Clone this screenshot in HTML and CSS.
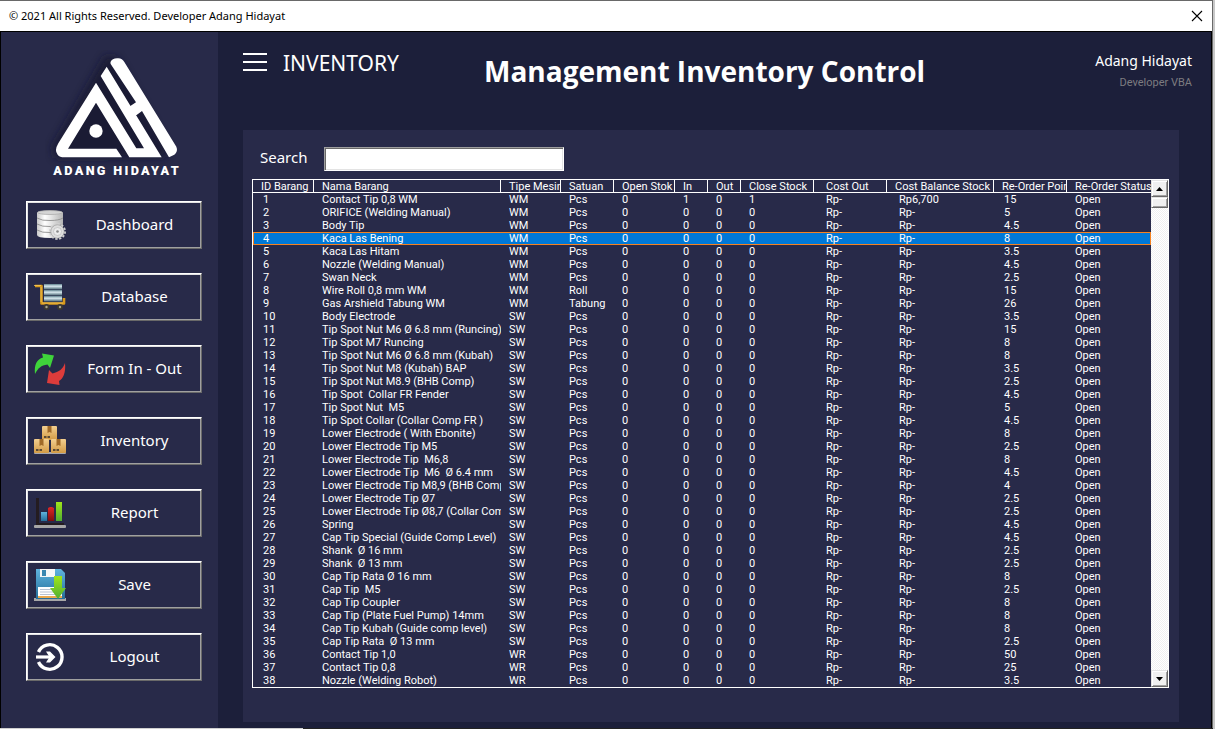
FILE: index.html
```html
<!DOCTYPE html>
<html lang="id">
<head>
<meta charset="utf-8">
<title>Management Inventory Control</title>
<link rel="stylesheet" href="styles.css">
</head>
<body>
<div class="window">
  <header class="titlebar">
    <span>© 2021 All Rights Reserved. Developer Adang Hidayat</span>
    <button class="close" type="button" aria-label="Close">
      <svg width="12" height="12" viewBox="0 0 12 12"><path d="M1 1L11 11M11 1L1 11" stroke="#000" stroke-width="1.1" fill="none"/></svg>
    </button>
  </header>
  <div class="body">
    <aside class="sidebar">
      <svg class="logo" viewBox="0 0 435 405" role="img" aria-label="Adang Hidayat">
        <defs><filter id="glow" x="-20%" y="-20%" width="140%" height="140%"><feGaussianBlur stdDeviation="12"/></filter></defs>
        <g filter="url(#glow)" opacity=".75">
          <path fill="#15162f" d="M180 18L215 20L372 300L360 322L30 325L22 290Z"/>
        </g>
        <g fill="#fff">
          <path d="M153 98L40 280Q27 302 38 314Q44 322 58 322L231 322L214 296L69 296L153 158L253 322L350 322L185 50L167 78L297 295L274 295Z"/>
          <path d="M197 42Q194 34 204 28Q210 24 220 25Q232 26 238 36L394 290Q400 304 388 314L372 322L291 183L275 195L262 196L246 168L256 168L273 157Z"/>
          <circle cx="153" cy="243" r="20"/>
        </g>
        <text class="logo-text" x="25" y="375">ADANG HIDAYAT</text>
      </svg>
      <nav class="menu">
        <button class="menu-item" type="button">
          <svg class="icon" viewBox="0 0 32 32">
            <defs><linearGradient id="cyl"><stop offset="0" stop-color="#c9c9c9"/><stop offset=".3" stop-color="#fff"/><stop offset="1" stop-color="#b5b5b5"/></linearGradient></defs>
            <path fill="url(#cyl)" d="M3 4Q3 1.500 16 1.500Q29 1.500 29 4L29 26Q28 29 16 29Q3 29 3 26Z"/>
            <ellipse cx="16" cy="3.500" rx="12.500" ry="2" fill="#d5d5d5" stroke="#a6a6a6" stroke-width=".7"/>
            <path d="M3 9Q8 12 16 11.500Q25 11.500 29 9M3 15Q8 18 16 17.500Q25 17.500 29 15M3 21Q8 24 16 23.500Q25 23.500 29 21" fill="none" stroke="#8f8f8f" stroke-width=".9"/>
            <circle cx="23.500" cy="22.500" r="7.500" fill="none" stroke="#d2d2d2" stroke-width="2" stroke-dasharray="2.300 1.600"/>
            <circle cx="23.500" cy="22.500" r="6.700" fill="#dedede" stroke="#999" stroke-width=".6"/>
            <circle cx="23.500" cy="22.500" r="4" fill="#ececec" stroke="#b5b5b5" stroke-width=".6"/>
            <circle cx="23.500" cy="22.500" r="1.300" fill="#888"/>
          </svg><span>Dashboard</span></button>
        <button class="menu-item" type="button">
          <svg class="icon" viewBox="0 0 32 32">
            <defs><linearGradient id="slab" x2="0" y2="1"><stop offset="0" stop-color="#5e7f8c"/><stop offset=".4" stop-color="#d9eaf0"/><stop offset="1" stop-color="#4a6673"/></linearGradient></defs>
            <path d="M1 5H7.500V22.500H30V17" fill="none" stroke="#d99a1c" stroke-width="2.600" stroke-linejoin="round"/>
            <path d="M0 4.500H7M7 6V21M8 22H29" fill="none" stroke="#f6c95a" stroke-width=".8"/>
            <path fill="url(#slab)" d="M10 3H28V8.500H10Z"/>
            <path fill="url(#slab)" d="M10 9H28V14.500H10Z"/>
            <path fill="url(#slab)" d="M10 15H28V20.500H10Z"/>
            <circle cx="12.500" cy="26" r="3" fill="#3b3831"/><circle cx="26" cy="26" r="3" fill="#3b3831"/>
            <circle cx="12.500" cy="26" r="1.200" fill="#aaa48e"/><circle cx="26" cy="26" r="1.200" fill="#aaa48e"/>
          </svg><span>Database</span></button>
        <button class="menu-item" type="button">
          <svg class="icon" viewBox="0 0 32 32">
            <path fill="#3fd43b" d="M1 21C0 11 3 6.500 9 4.500L8 .500L20 2.500L16 15L13.500 11.500C7 12.500 4 15 1 21Z"/>
            <path fill="#dd3c3b" d="M31 10C32 20 29 26 25 28L25.500 32L13 30L15 17L18.500 20.500C25 19 29 16 31 10Z"/>
          </svg><span>Form In - Out</span></button>
        <button class="menu-item" type="button">
          <svg class="icon" viewBox="0 0 32 32">
            <defs>
              <linearGradient id="box" x2="0" y2="1"><stop offset="0" stop-color="#f3cf90"/><stop offset="1" stop-color="#d39b45"/></linearGradient>
              <g id="crate"><rect width="15" height="14" rx="1" fill="url(#box)"/><path fill="#a06a28" d="M5.500 0H9.500V7L7.500 6L5.500 7Z"/><path fill="#5b4a35" d="M2 10H4V12H2ZM4.500 10H5.500V12H4.500ZM6 10H8V12H6Z"/></g>
            </defs>
            <rect y="27" width="32" height="2" rx="1" fill="#a7a7ad"/>
            <use href="#crate" x="8" y="1"/><use href="#crate" x="0" y="14"/><use href="#crate" x="17" y="14"/>
          </svg><span>Inventory</span></button>
        <button class="menu-item" type="button">
          <svg class="icon" viewBox="0 0 32 32">
            <defs>
              <linearGradient id="blue" x2="0" y2="1"><stop offset="0" stop-color="#5fb4de"/><stop offset="1" stop-color="#256d99"/></linearGradient>
              <linearGradient id="red" x2="0" y2="1"><stop offset="0" stop-color="#e02626"/><stop offset="1" stop-color="#800d0d"/></linearGradient>
              <linearGradient id="green" x2="0" y2="1"><stop offset="0" stop-color="#a1e619"/><stop offset="1" stop-color="#4fae32"/></linearGradient>
            </defs>
            <path fill="#241c20" d="M2 1H5V26H30V28H2Z"/>
            <rect y="28" width="32" height="3" rx="1" fill="#a7a7a7"/>
            <rect x="7" y="15" width="6" height="9" fill="url(#blue)"/>
            <path d="M14 11L16 10H18L20 11V24H14Z" fill="url(#red)"/>
            <rect x="22" y="5" width="6" height="19" fill="url(#green)"/>
          </svg><span>Report</span></button>
        <button class="menu-item" type="button">
          <svg class="icon" viewBox="0 0 32 32">
            <rect y="29" width="32" height="3" fill="#a7a7a7"/>
            <path fill="url(#blue)" d="M2 0H27L31 4V30H2Z"/>
            <path fill="#f7f7f7" d="M6 0H21V8H6Z"/><path fill="#3b87b0" d="M8 1H12V7H8Z"/>
            <path fill="#fff" d="M4 18H28V28H4Z"/><path fill="#e9a94e" d="M4 27H28V29H4Z"/>
            <path d="M6 20.500H25M6 23H25M6 25.500H25" stroke="#b9c3d2" stroke-width="1"/>
            <path fill="url(#green)" d="M20 7H28V19H32L24 30L16 19H20Z"/>
          </svg><span>Save</span></button>
        <button class="menu-item" type="button">
          <svg class="icon" viewBox="0 0 32 32">
            <path d="M4.500 11A12.300 12.300 0 1 1 4.500 21" fill="none" stroke="#fff" stroke-width="3.400"/>
            <path d="M2 16H16" stroke="#fff" stroke-width="3.200"/>
            <path fill="#fff" d="M12 10.500H16L21.500 16L16 21.500H12L15.500 16Z"/>
          </svg><span>Logout</span></button>
      </nav>
    </aside>
    <main class="main">
      <div class="topbar">
        <div class="section">
          <button class="burger" type="button" aria-label="Menu"><i></i><i></i><i></i></button>
          <h2 class="section-name">INVENTORY</h2>
        </div>
        <h1 class="heading">Management Inventory Control</h1>
        <div class="user">
          <div class="user-name">Adang Hidayat</div>
          <div class="user-role">Developer VBA</div>
        </div>
      </div>
      <section class="panel">
        <div class="search">
          <label for="search">Search</label>
          <input id="search" type="text">
        </div>
        <div class="list">
          <table class="grid">
            <colgroup>
              <col class="w-id"><col><col class="w-type"><col class="w-unit"><col class="w-id"><col class="w-move"><col class="w-move"><col class="w-mid"><col class="w-mid"><col class="w-balance"><col class="w-mid"><col class="w-status">
            </colgroup>
            <thead>
              <tr><th>ID Barang</th><th>Nama Barang</th><th>Tipe Mesin</th><th>Satuan</th><th>Open Stok</th><th>In</th><th>Out</th><th>Close Stock</th><th>Cost Out</th><th>Cost Balance Stock</th><th>Re-Order Point</th><th>Re-Order Status</th></tr>
            </thead>
            <tbody id="rows"></tbody>
          </table>
          <div class="scroll">
            <button class="scroll-btn" type="button" aria-label="Scroll up"><svg width="7" height="4" viewBox="0 0 7 4"><path d="M0 4L3.500 0L7 4Z"/></svg></button>
            <div class="thumb"></div>
            <button class="scroll-btn scroll-down" type="button" aria-label="Scroll down"><svg width="7" height="4" viewBox="0 0 7 4"><path d="M0 0L3.500 4L7 0Z"/></svg></button>
          </div>
        </div>
      </section>
    </main>
  </div>
</div>
<div class="edge"></div>
<script src="app.js"></script>
</body>
</html>
```
FILE: styles.css
```css
* { box-sizing: border-box; }

body {
  margin: 0;
  min-height: 100vh;
  display: flex;
  flex-direction: column;
  padding-right: 2px;
  background: #c8c8c8;
  font-family: "Noto Sans", "Open Sans", sans-serif;
  color: #fff;
}

button { font: inherit; color: inherit; cursor: pointer; }

.window {
  flex: 1;
  display: flex;
  flex-direction: column;
  border-top: 1px solid #696969;
  border-right: 1px solid #696969;
}

.titlebar {
  display: flex;
  align-items: center;
  justify-content: space-between;
  height: 30px;
  padding: 0 9px;
  background: #fff;
  color: #000;
  font-size: 11px;
  line-height: 14px;
}

.close {
  display: flex;
  padding: 0;
  border: 0;
  background: none;
}

.body {
  flex: 1;
  display: flex;
  border: 1px solid #000;
  border-bottom: 0;
  background: #1c1f3a;
}

.sidebar {
  width: 217px;
  padding: 18px 16px 24px 25px;
  background: #282a49;
}

.logo {
  display: block;
  width: 145px;
  height: 135px;
  margin: 0 0 16px 19px;
}

.logo-text {
  fill: #fff;
  font-family: Roboto, sans-serif;
  font-size: 38px;
  font-weight: 900;
  letter-spacing: 7px;
}

.menu {
  display: flex;
  flex-direction: column;
  gap: 24px;
}

.menu-item {
  display: flex;
  align-items: center;
  gap: 4px;
  height: 48px;
  padding: 0 2px 0 7px;
  border: 1px solid;
  border-color: #fff #696969 #696969 #fff;
  box-shadow: inset 1px 1px #e3e3e3, inset -1px -1px #a0a0a0;
  background: #282a49;
  font-size: 15px;
}

.menu-item span { flex: 1; padding-bottom: 2px; text-align: center; }

.icon { width: 32px; height: 32px; }

.main {
  flex: 1;
  display: flex;
  flex-direction: column;
  min-width: 0;
  padding: 20px 19px 6px 25px;
}

.topbar {
  display: grid;
  grid-template-columns: 241px auto 1fr;
  height: 78px;
}

.section {
  display: flex;
  align-items: flex-start;
  gap: 16px;
}

.burger {
  display: flex;
  flex-direction: column;
  gap: 6px;
  width: 24px;
  margin-top: 1px;
  padding: 0;
  border: 0;
  background: none;
}

.burger i { height: 2px; background: #fff; }

.section-name {
  margin: 0;
  font-size: 21px;
  font-weight: 400;
  line-height: 22px;
}

.heading {
  margin: 0;
  font-family: "Open Sans", "Noto Sans", sans-serif;
  font-size: 28px;
  font-weight: 700;
  line-height: 38px;
}

.user { text-align: right; }
.user-name { font-size: 14px; line-height: 18px; }
.user-role {
  font-family: Roboto, sans-serif;
  font-size: 11px;
  line-height: 26px;
  color: #7c7c80;
}

.panel {
  flex: 1;
  margin-right: 13px;
  padding: 17px 10px 34px 9px;
  background: #282a49;
}

.search {
  display: flex;
  align-items: flex-start;
  gap: 16px;
  padding: 0 0 8px 8px;
  font-size: 15px;
  line-height: 20px;
}

.search label { width: 48px; }

.search input {
  width: 240px;
  height: 24px;
  padding: 0 4px;
  border: 1px solid;
  border-color: #a0a0a0 #fff #fff #a0a0a0;
  box-shadow: inset 1px 1px #696969, inset -1px -1px #e3e3e3;
  background: #fff;
  font: inherit;
}

.list {
  display: flex;
  border: 1px solid #fff;
}

.grid {
  flex: 1;
  width: 100%;
  min-width: 0;
  table-layout: fixed;
  border-collapse: separate;
  border-spacing: 0;
  font-family: Roboto, sans-serif;
  font-size: 11px;
  line-height: 12px;
}

.w-id { width: 61px; }
.w-type { width: 60px; }
.w-unit { width: 53px; }
.w-move { width: 33px; }
.w-mid { width: 73px; }
.w-balance { width: 107px; }
.w-status { width: 84px; }

.grid th,
.grid td {
  height: 13px;
  padding: 1px 0 0 8px;
  overflow: hidden;
  white-space: pre;
  text-align: left;
  font-weight: 400;
}

.grid td:first-child,
.grid td:nth-child(11) { padding-left: 10px; }
.grid th:nth-child(9),
.grid td:nth-child(9),
.grid td:nth-child(10) { padding-left: 12px; }

.grid th {
  border-right: 1px solid #fff;
  border-bottom: 1px solid #fff;
  line-height: 11px;
}

.grid th:last-child { border-right: 0; }

.selected td { background: #0078d7; }
.selected { outline: 1px solid #f58220; outline-offset: -1px; }

.scroll {
  display: flex;
  flex: none;
  flex-direction: column;
  width: 17px;
  background: repeating-conic-gradient(#f0f0f0 0 25%, #fff 0 50%) 0 0 / 2px 2px;
}

.scroll-btn,
.thumb {
  border: 1px solid;
  border-color: #e3e3e3 #696969 #696969 #e3e3e3;
  box-shadow: inset 1px 1px #fff, inset -1px -1px #a0a0a0;
  background: #f0f0f0;
}

.scroll-btn {
  display: flex;
  align-items: center;
  justify-content: center;
  height: 17px;
  padding: 0;
}

.thumb { height: 11px; }
.scroll-down { margin-top: auto; }

.edge {
  height: 1px;
  background: linear-gradient(90deg, #d0d0d0 25%, #222 25%);
}
```
FILE: app.js
```js
const items = [
  ["Contact Tip 0,8 WM", "WM", "Pcs", "15"],
  ["ORIFICE (Welding Manual)", "WM", "Pcs", "5"],
  ["Body Tip", "WM", "Pcs", "4.5"],
  ["Kaca Las Bening", "WM", "Pcs", "8"],
  ["Kaca Las Hitam", "WM", "Pcs", "3.5"],
  ["Nozzle (Welding Manual)", "WM", "Pcs", "4.5"],
  ["Swan Neck", "WM", "Pcs", "2.5"],
  ["Wire Roll 0,8 mm WM", "WM", "Roll", "15"],
  ["Gas Arshield Tabung WM", "WM", "Tabung", "26"],
  ["Body Electrode", "SW", "Pcs", "3.5"],
  ["Tip Spot Nut M6 Ø 6.8 mm (Runcing)", "SW", "Pcs", "15"],
  ["Tip Spot M7 Runcing", "SW", "Pcs", "8"],
  ["Tip Spot Nut M6 Ø 6.8 mm (Kubah)", "SW", "Pcs", "8"],
  ["Tip Spot Nut M8 (Kubah) BAP", "SW", "Pcs", "3.5"],
  ["Tip Spot Nut M8.9 (BHB Comp)", "SW", "Pcs", "2.5"],
  ["Tip Spot  Collar FR Fender", "SW", "Pcs", "4.5"],
  ["Tip Spot Nut  M5", "SW", "Pcs", "5"],
  ["Tip Spot Collar (Collar Comp FR )", "SW", "Pcs", "4.5"],
  ["Lower Electrode ( With Ebonite)", "SW", "Pcs", "8"],
  ["Lower Electrode Tip M5", "SW", "Pcs", "2.5"],
  ["Lower Electrode Tip  M6,8", "SW", "Pcs", "8"],
  ["Lower Electrode Tip  M6  Ø 6.4 mm", "SW", "Pcs", "4.5"],
  ["Lower Electrode Tip M8,9 (BHB Comp", "SW", "Pcs", "4"],
  ["Lower Electrode Tip Ø7", "SW", "Pcs", "2.5"],
  ["Lower Electrode Tip Ø8,7 (Collar Com", "SW", "Pcs", "2.5"],
  ["Spring", "SW", "Pcs", "4.5"],
  ["Cap Tip Special (Guide Comp Level)", "SW", "Pcs", "4.5"],
  ["Shank  Ø 16 mm", "SW", "Pcs", "2.5"],
  ["Shank  Ø 13 mm", "SW", "Pcs", "2.5"],
  ["Cap Tip Rata Ø 16 mm", "SW", "Pcs", "8"],
  ["Cap Tip  M5", "SW", "Pcs", "2.5"],
  ["Cap Tip Coupler", "SW", "Pcs", "8"],
  ["Cap Tip (Plate Fuel Pump) 14mm", "SW", "Pcs", "8"],
  ["Cap Tip Kubah (Guide comp level)", "SW", "Pcs", "8"],
  ["Cap Tip Rata  Ø 13 mm", "SW", "Pcs", "2.5"],
  ["Contact Tip 1,0", "WR", "Pcs", "50"],
  ["Contact Tip 0,8", "WR", "Pcs", "25"],
  ["Nozzle (Welding Robot)", "WR", "Pcs", "3.5"]
];
const received = { 1: { qty: "1", balance: "Rp6,700" } };
const selectedId = 4;

const body = document.getElementById("rows");
items.forEach(([name, type, unit, reorder], i) => {
  const id = i + 1;
  const stock = received[id] || { qty: "0", balance: "Rp-" };
  const row = body.insertRow();
  if (id === selectedId) row.className = "selected";
  [id, name, type, unit, "0", stock.qty, "0", stock.qty, "Rp-", stock.balance, reorder, "Open"]
    .forEach(value => { row.insertCell().textContent = value; });
});
```
